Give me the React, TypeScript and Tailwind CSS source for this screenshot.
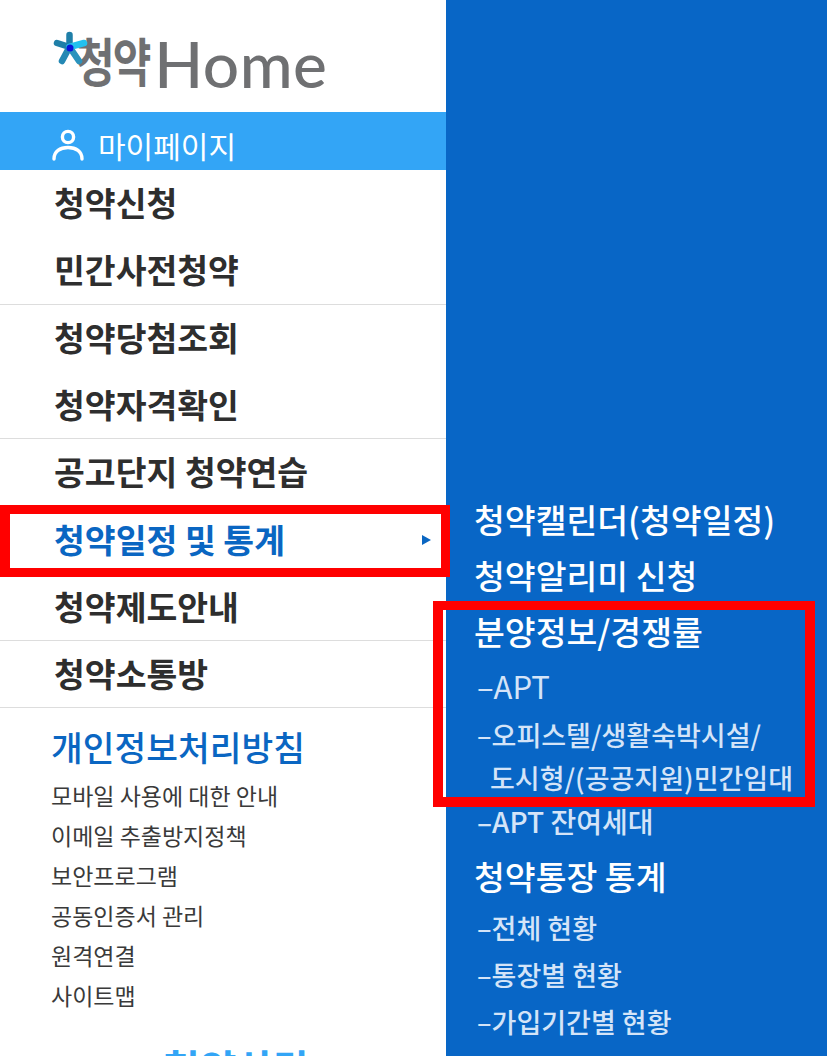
const krFont = "font-['Noto_Sans_CJK_KR','Noto_Sans',sans-serif]"

const mainMenu = [
  { label: '청약신청', line: 'border-transparent' },
  { label: '민간사전청약', line: 'border-[#dddddd]' },
  { label: '청약당첨조회', line: 'border-transparent' },
  { label: '청약자격확인', line: 'border-[#dddddd]' },
  { label: '공고단지 청약연습', line: 'border-transparent' },
  { label: '청약일정 및 통계', line: 'border-transparent', active: true },
  { label: '청약제도안내', line: 'border-[#dddddd]' },
  { label: '청약소통방', line: 'border-[#dddddd]' },
]

const privacyLinks = ['모바일 사용에 대한 안내', '이메일 추출방지정책', '보안프로그램', '공동인증서 관리', '원격연결', '사이트맵']

function LogoStar() {
  return (
    <svg width="36" height="36" viewBox="0 0 36 36" className="absolute left-[52px] top-[30px]">
      <g strokeWidth="6.500" strokeLinecap="round">
        <path d="M17.500 17 L17.500 5" stroke="#1f7fa8" />
        <path d="M17.500 17 L5 13" stroke="#1f7fa8" />
        <path d="M17.500 17 L10 31" stroke="#2488b4" />
        <path d="M17.500 17 L27 31" stroke="#2b93bd" />
        <path d="M17.500 17 L32 13" stroke="#22c1ee" />
      </g>
      <circle cx="18" cy="18" r="3.500" fill="#0a14d8" />
    </svg>
  )
}

export default function App() {
  return (
    <div className={`relative flex h-[1056px] w-[827px] overflow-hidden bg-[#0866c6] ${krFont}`}>
      <aside className="w-[446px] shrink-0 bg-white">
        <div className="relative h-[112px]">
          <div className="flex items-baseline pl-[76px] pt-[28px] text-[#6f7072]">
            <span className="inline-block origin-bottom -translate-y-[2px] scale-y-[1.25] text-[42px] font-bold leading-[72px] tracking-[-2px]">청약</span>
            <span className="ml-[5px] font-['Lato',sans-serif] text-[64px] font-medium leading-[72px] tracking-[0.5px]">Home</span>
          </div>
          <LogoStar />
        </div>

        <div className="flex h-[58px] items-center gap-[14px] bg-[#33a5f6] pl-[52px] pt-[8px] text-white">
          <svg width="32" height="34" viewBox="0 0 32 34" fill="none" stroke="currentColor" strokeWidth="3.400" strokeLinecap="round">
            <circle cx="16" cy="9" r="5.600" />
            <path d="M2 31c0-7.500 6-11.500 14-11.500S30 23.500 30 31" />
          </svg>
          <span className="text-[30px] leading-none">마이페이지</span>
        </div>

        <ul>
          {mainMenu.map((item) => (
            <li
              key={item.label}
              className={`flex h-[67.300px] items-center justify-between border-b pb-[2px] pl-[54px] pr-[15px] text-[33.500px] font-bold ${item.line} ${item.active ? 'text-[#0a66c2]' : 'text-[#2e2e2e]'}`}
            >
              {item.label}
              {item.active && <span className="mt-[3px] h-0 w-0 border-y-[5px] border-l-[9px] border-y-transparent border-l-[#0a66c2]" />}
            </li>
          ))}
        </ul>

        <div className="pl-[51px] pt-[14px]">
          <h2 className="text-[34.500px] font-medium leading-[48px] text-[#0a66c2]">개인정보처리방침</h2>
          <ul className="mt-[5px] text-[#3a3a3a]">
            {privacyLinks.map((link) => (
              <li key={link} className="text-[23px] leading-[40px]">{link}</li>
            ))}
          </ul>
          <p className="mt-[28px] pl-[112px] text-[40px] font-bold leading-[48px] text-[#33a5f6]">청약상담</p>
        </div>
      </aside>

      <nav className="flex-1 pl-[28px] pt-[491px] font-medium text-white">
        <p className="text-[33.500px] leading-[56px]">청약캘린더(청약일정)</p>
        <p className="text-[33.500px] leading-[56px]">청약알리미 신청</p>
        <p className="text-[33.500px] leading-[56px]">분양정보/경쟁률</p>
        <p className="pl-[3px] text-[31px] font-normal leading-[54px] text-[#d4e4f8]">–APT</p>
        <p className="pl-[3px] text-[27px] leading-[43px] text-[#d4e4f8]">–오피스텔/생활숙박시설/</p>
        <p className="pl-[16px] text-[27px] leading-[43px] text-[#d4e4f8]">도시형/(공공지원)민간임대</p>
        <p className="pl-[3px] text-[28px] leading-[44px] text-[#d4e4f8]">–APT 잔여세대</p>
        <p className="mt-[5px] text-[33.500px] leading-[56px]">청약통장 통계</p>
        <p className="pl-[3px] text-[27px] leading-[47px] text-[#d4e4f8]">–전체 현황</p>
        <p className="pl-[3px] text-[27px] leading-[47px] text-[#d4e4f8]">–통장별 현황</p>
        <p className="pl-[3px] text-[27px] leading-[47px] text-[#d4e4f8]">–가입기간별 현황</p>
      </nav>

      {/* red annotation boxes sit over the menu */}
      <div className="absolute left-0 top-[505px] h-[72px] w-[450px] border-[9px] border-l-[10px] border-[#ff0000]" />
      <div className="absolute left-[433px] top-[601px] h-[206px] w-[382px] border-[10px] border-t-[9px] border-[#ff0000]" />
    </div>
  )
}
